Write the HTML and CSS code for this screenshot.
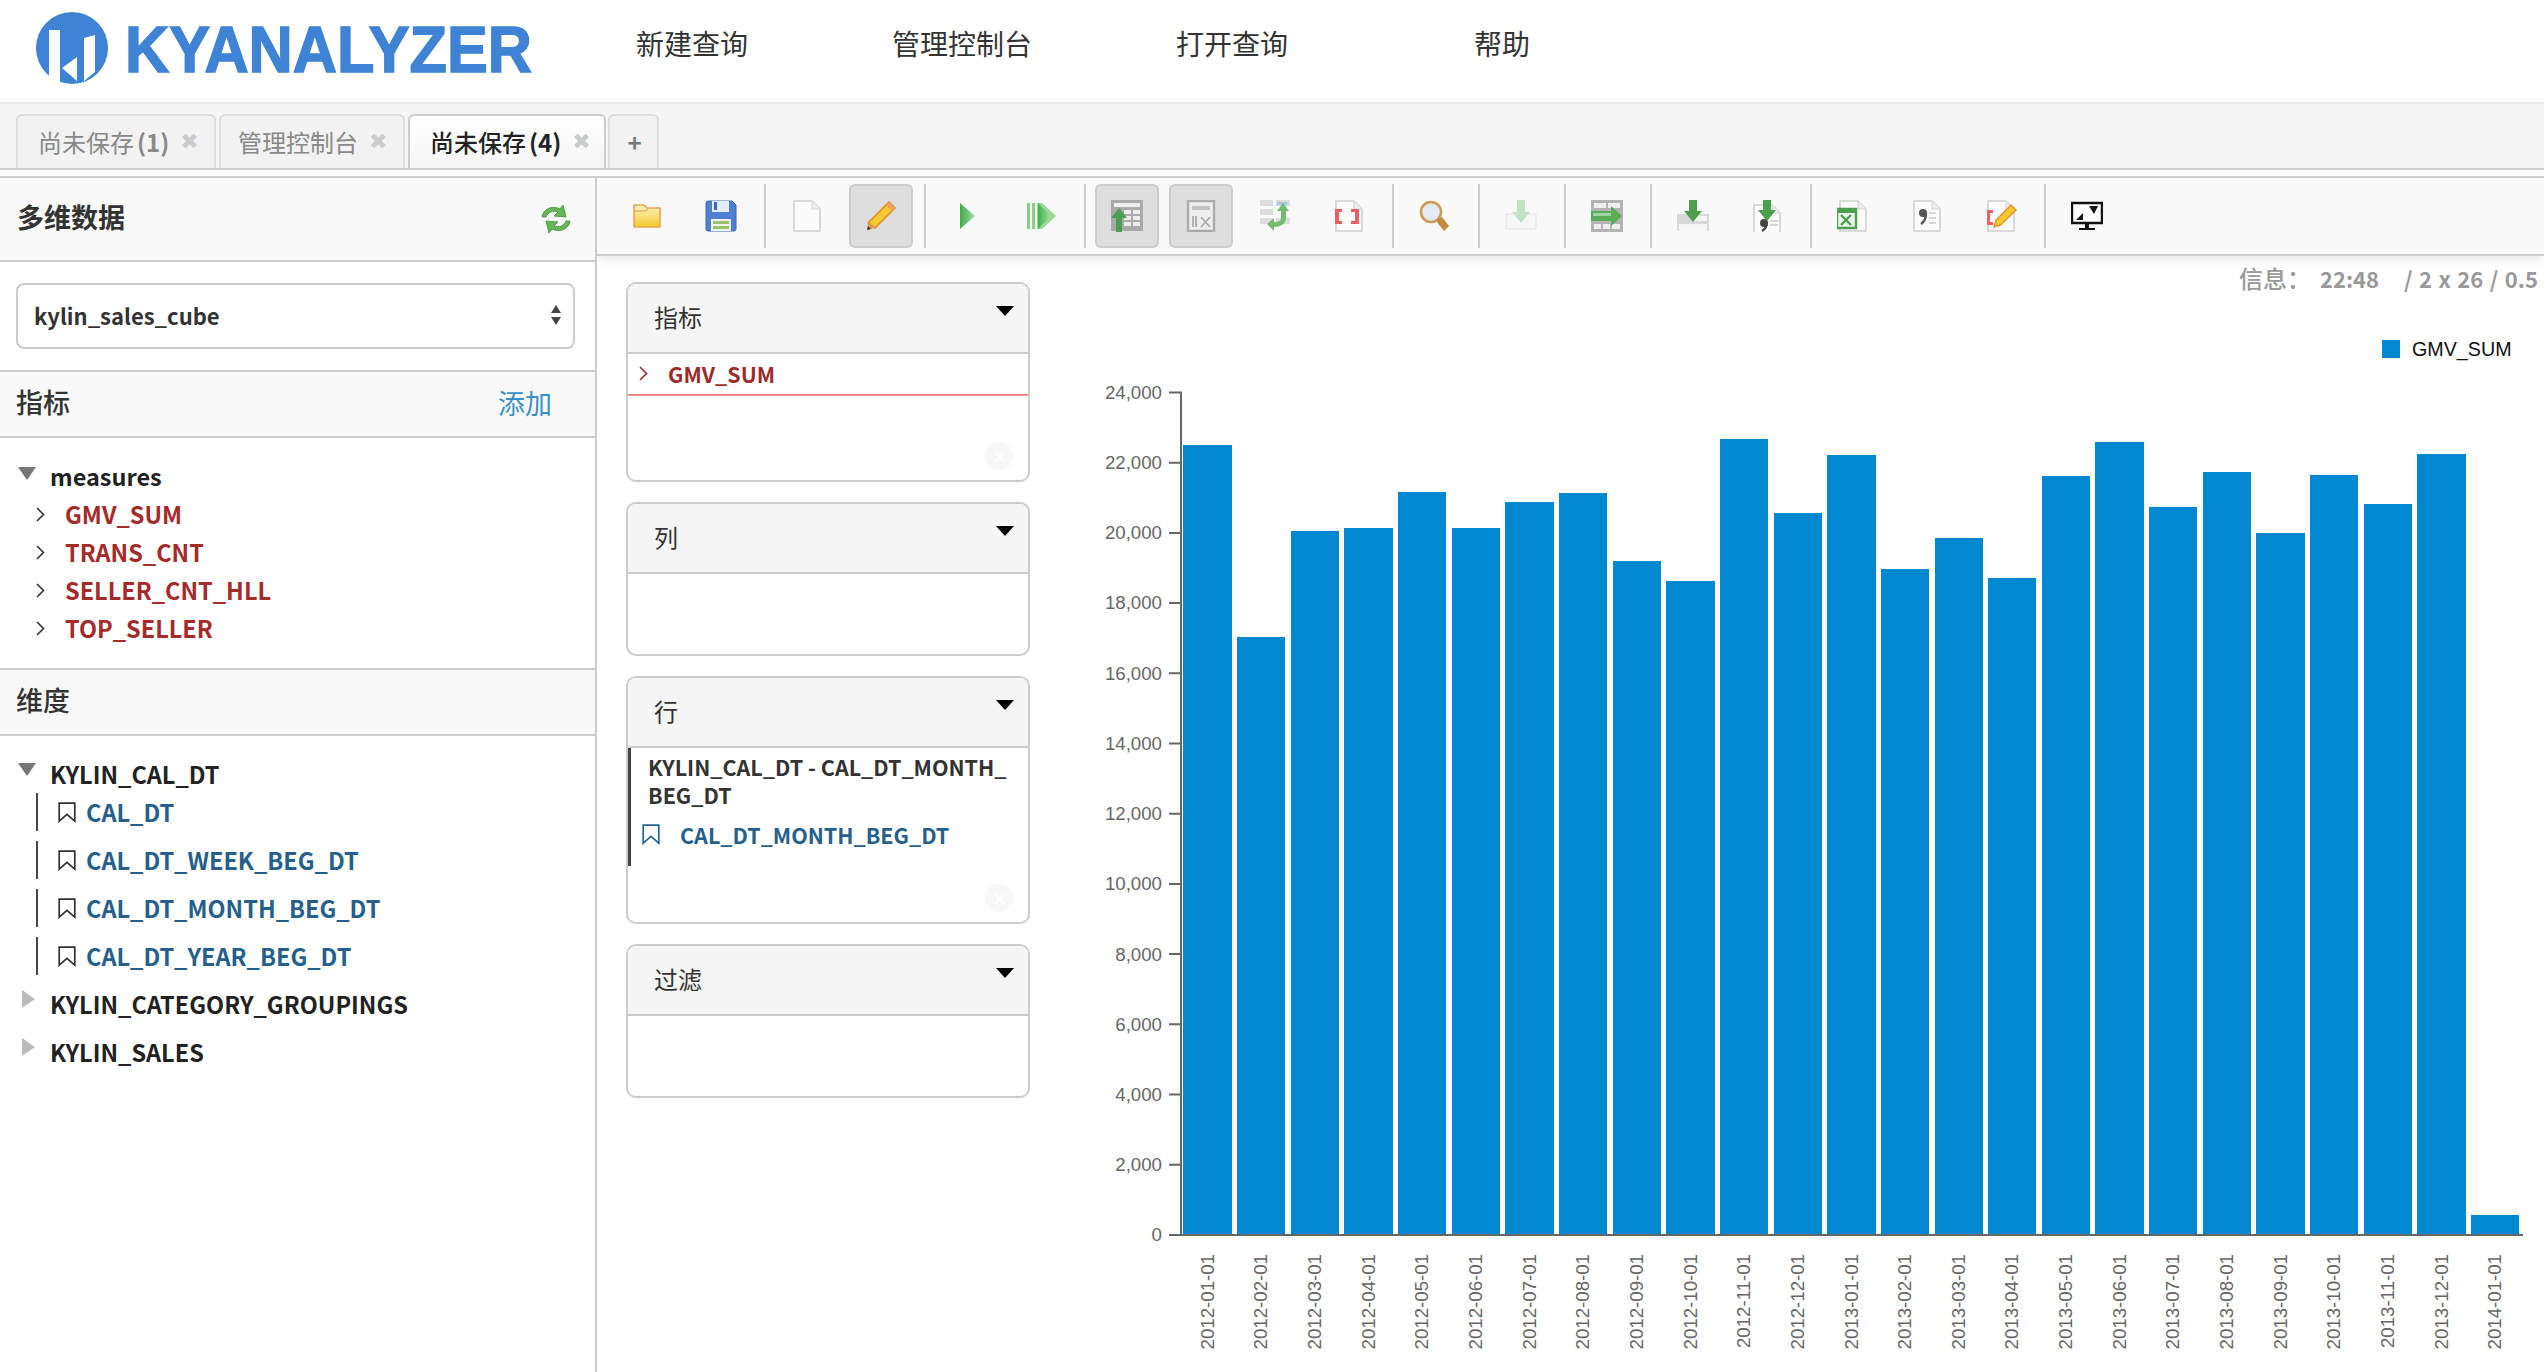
FILE: index.html
```html
<!DOCTYPE html>
<html>

<head>
	<meta charset="utf-8">
	<title>KyAnalyzer</title>
	<link rel="stylesheet" href="styles.css">
</head>

<body>
	<!-- shared icon parts -->
	<svg class="sprite">
		<defs>
			<linearGradient id="gYellow" x1="0" y1="0" x2="0" y2="1">
				<stop offset="0" stop-color="#fff3c4" />
				<stop offset="1" stop-color="#f5c92e" />
			</linearGradient>
			<linearGradient id="gGreen" x1="0" y1="0" x2="1" y2="0">
				<stop offset="0" stop-color="#3fae4a" />
				<stop offset="1" stop-color="#a4dfa2" />
			</linearGradient>
			<symbol id="chev" viewBox="0 0 9 15">
				<path d="M1 1l6.5 6.5L1 14" fill="none" stroke="currentColor" stroke-width="1.6" />
			</symbol>
			<symbol id="mark" viewBox="0 0 18 21">
				<path d="M1.2 1.2h15.6v18L9 12.4 1.2 19.2z" fill="none" stroke="currentColor" stroke-width="1.7" />
			</symbol>
			<symbol id="page" viewBox="0 0 32 32">
				<path d="M3 1h18l8 8v22H3z" fill="#fbfbfb" stroke="#cfcfcf" stroke-width="1.6" />
				<path d="M21 1v8h8" fill="#eee" stroke="#d8d8d8" stroke-width="1.2" />
			</symbol>
		</defs>
	</svg>

	<header class="topbar">
		<div class="logo">
			<svg width="636" height="96" viewBox="0 0 636 96">
				<circle cx="72" cy="48" r="36" fill="#3f83d4" />
				<path d="M49 30h11v53H49zM62 68l15-11v24zM84 38l11-3v37l-11 9z" fill="#fff" />
				<text class="logoText" x="125" y="72" textLength="407" lengthAdjust="spacingAndGlyphs">KYANALYZER</text>
			</svg>
		</div>
		<nav class="menu">
			<a>新建查询</a>
			<a>管理控制台</a>
			<a>打开查询</a>
			<a>帮助</a>
		</nav>
	</header>

	<div class="tabs">
		<div class="tab tabOne">尚未保存 <b>(1)</b><span class="close">✖</span></div>
		<div class="tab tabTwo">管理控制台<span class="close">✖</span></div>
		<div class="tab tabThree selected">尚未保存 <b>(4)</b><span class="close">✖</span></div>
		<div class="tab tabAdd"><b>+</b></div>
	</div>

	<main class="main">
		<aside class="sidebar">
			<div class="cubeHead">
				<h3>多维数据</h3>
				<svg width="34" height="34" viewBox="0 0 34 34">
					<path d="M3 15C4 7 13 3 21 7l3-4 3 12-12-1 4-4c-5-2-10 0-12 5z" fill="#67b556" stroke="#4f9e45" />
					<path d="M31 19c-1 8-10 12-18 8l-3 4-3-12 12 1-4 4c5 2 10 0 12-5z" fill="#67b556" stroke="#4f9e45" />
				</svg>
			</div>
			<div class="cubePick">
				<div class="select">
					<span>kylin_sales_cube</span>
					<i class="updown"></i>
				</div>
			</div>

			<div class="sectionHead">
				<h4>指标</h4>
				<a class="addLink">添加</a>
			</div>
			<ul class="tree measureTree">
				<li class="group"><i class="triDown"></i>measures</li>
				<li class="measure"><svg class="chev"><use href="#chev" /></svg>GMV_SUM</li>
				<li class="measure"><svg class="chev"><use href="#chev" /></svg>TRANS_CNT</li>
				<li class="measure"><svg class="chev"><use href="#chev" /></svg>SELLER_CNT_HLL</li>
				<li class="measure"><svg class="chev"><use href="#chev" /></svg>TOP_SELLER</li>
			</ul>

			<div class="sectionHead">
				<h4>维度</h4>
			</div>
			<ul class="tree dimTree">
				<li class="group"><i class="triDown"></i>KYLIN_CAL_DT</li>
				<li class="level"><svg class="mark"><use href="#mark" /></svg>CAL_DT</li>
				<li class="level"><svg class="mark"><use href="#mark" /></svg>CAL_DT_WEEK_BEG_DT</li>
				<li class="level"><svg class="mark"><use href="#mark" /></svg>CAL_DT_MONTH_BEG_DT</li>
				<li class="level"><svg class="mark"><use href="#mark" /></svg>CAL_DT_YEAR_BEG_DT</li>
				<li class="group"><i class="triRight"></i>KYLIN_CATEGORY_GROUPINGS</li>
				<li class="group"><i class="triRight"></i>KYLIN_SALES</li>
			</ul>
		</aside>

		<section class="content">
			<div class="toolbar">
				<span class="tool"><svg width="32" height="32" viewBox="0 0 32 32">
						<path d="M3 5h10l3 3h13v19H3z" fill="url(#gYellow)" stroke="#eaa652" stroke-width="1.6" stroke-linejoin="round" />
						<path d="M4 11h11l2-2" fill="none" stroke="#e6b264" stroke-width="1.4" />
					</svg></span>
				<span class="tool"><svg width="32" height="32" viewBox="0 0 32 32">
						<path d="M1 3a2 2 0 0 1 2-2h24l4 4v24a2 2 0 0 1-2 2H3a2 2 0 0 1-2-2z" fill="#4f7fd0" stroke="#3c68b8" />
						<path d="M7 1h17v11H7z" fill="#e4ecf8" />
						<path d="M9 2h3v8H9z" fill="#3c68b8" />
						<path d="M6 19h20v12H6z" fill="#f0f4f0" />
						<path d="M8 21h16v3H8zM8 26h16v3H8z" fill="#9bc36a" />
					</svg></span>
				<i class="sep"></i>
				<span class="tool"><svg width="32" height="32" viewBox="0 0 32 32"><use href="#page" /></svg></span>
				<span class="tool on"><svg width="32" height="32" viewBox="0 0 32 32">
						<path d="M24 2l6 6L10 28 3 23z" fill="#f3c92f" stroke="#e08f2e" stroke-width="1.6" />
						<path d="M3 23l-1 7 8-2z" fill="#d99b59" />
						<path d="M2 30l1-4 3 3z" fill="#5a3a1c" />
						<path d="M21 5l6 6 3-3-6-6z" fill="#f0a25a" />
					</svg></span>
				<i class="sep"></i>
				<span class="tool"><svg width="32" height="32" viewBox="0 0 32 32">
						<path d="M9 3l15 13L9 29z" fill="url(#gGreen)" />
					</svg></span>
				<span class="tool"><svg width="32" height="32" viewBox="0 0 32 32">
						<path d="M2 3h3v26H2zM7 3h3v26H7z" fill="#88cf8a" />
						<path d="M12 3h5l14 13-14 13h-5z" fill="#9ad89a" />
						<path d="M13 3l13 13-13 13z" fill="url(#gGreen)" />
					</svg></span>
				<i class="sep"></i>
				<span class="tool on"><svg width="32" height="32" viewBox="0 0 32 32">
						<path d="M0 0h32v31H0z" fill="#a9a9a9" />
						<path d="M3 3h26v4H3zM13 10h7v4h-7zM22 10h7v4h-7zM13 16h7v4h-7zM22 16h7v4h-7zM13 22h7v4h-7zM22 22h7v4h-7z" fill="#eee" />
						<path d="M8 8l8 10h-5v14H5V18H0z" fill="#4aa050" />
					</svg></span>
				<span class="tool on"><svg width="32" height="32" viewBox="0 0 32 32">
						<path d="M3 1h26v30H3z" fill="#eee" stroke="#aaa" stroke-width="2.4" />
						<path d="M7 6h18v4H7z" fill="#c2c2c2" />
						<path d="M8 16v11M11 16v11M16 17l9 10M25 17l-9 10" fill="none" stroke="#aaa" stroke-width="1.8" />
					</svg></span>
				<span class="tool"><svg width="32" height="32" viewBox="0 0 32 32">
						<path d="M1 0h13v6H1zM17 0h14v6H17zM1 9h13v6H1zM1 18h13v6H1zM17 18h14v6H17z" fill="#dcdcdc" />
						<path d="M18 2h10v3H18z" fill="#a9c8ec" />
						<path d="M24 3l6 8h-3v7c0 6-6 9-12 9v4l-7-7 7-6v4c4 0 7-1 7-4v-7h-4z" fill="#72bd70" />
					</svg></span>
				<span class="tool"><svg width="32" height="32" viewBox="0 0 32 32">
						<use href="#page" />
						<path d="M9 9H2v15h7v-3H6V12h3zM18 9h8v15h-8v-3h4V12h-4z" fill="#ef5f5f" />
					</svg></span>
				<i class="sep"></i>
				<span class="tool"><svg width="32" height="32" viewBox="0 0 32 32">
						<circle cx="12" cy="12" r="10" fill="#e2ecf8" stroke="#cf9b52" stroke-width="2.6" />
						<path d="M19 19l4-2 7 9-5 5-7-9z" fill="#c98a3e" />
					</svg></span>
				<i class="sep"></i>
				<span class="tool faded"><svg width="32" height="32" viewBox="0 0 32 32">
						<path d="M1 14h30v15H1z" fill="#f7f7f7" stroke="#e4e4e4" />
						<path d="M12 0h8v12h5l-9 11-9-11h5z" fill="#c3e2c3" />
					</svg></span>
				<i class="sep"></i>
				<span class="tool"><svg width="32" height="32" viewBox="0 0 32 32">
						<path d="M0 0h32v32H0z" fill="#b4b4b4" />
						<path d="M3 3h12v5H3zM17 3h12v5H17zM3 24h7v5H3zM12 24h7v5h-7zM21 24h8v5h-8z" fill="#eee" />
						<path d="M0 11h20V6l11 10-11 10v-5H0z" fill="#59ad59" />
						<path d="M2 13h18v3H2z" fill="#9fd59f" />
					</svg></span>
				<i class="sep"></i>
				<span class="tool"><svg width="32" height="32" viewBox="0 0 32 32">
						<path d="M0 14h32v17H0z" fill="#d9d9d9" />
						<path d="M2 24h28v7H2zM16 16h14v5H16z" fill="#f6f6f6" />
						<path d="M12 0h8v11h5l-9 11-9-11h5z" fill="#4c9f4c" />
					</svg></span>
				<span class="tool"><svg width="32" height="32" viewBox="0 0 32 32">
						<use href="#page" y="4" />
						<circle cx="13" cy="23" r="4" fill="#444" />
						<path d="M16 22c0 4-2 7-5 9" fill="none" stroke="#444" stroke-width="2.4" />
						<path d="M19 21h8M19 25h8" stroke="#ccc" stroke-width="1.6" />
						<path d="M12 0h8v10h5l-9 11-9-11h5z" fill="#4c9f4c" />
					</svg></span>
				<i class="sep"></i>
				<span class="tool"><svg width="32" height="32" viewBox="0 0 32 32">
						<use href="#page" />
						<path d="M0 9h19v19H0z" fill="#eaf4ea" stroke="#4f9e4f" stroke-width="2.4" />
						<path d="M0 9h19v4H0z" fill="#4f9e4f" />
						<path d="M4 15l10 10M14 15L4 25" stroke="#4f9e4f" stroke-width="2.4" />
					</svg></span>
				<span class="tool"><svg width="32" height="32" viewBox="0 0 32 32">
						<use href="#page" />
						<circle cx="12" cy="13" r="4" fill="#555" />
						<path d="M15 13c0 5-2 9-5 11" fill="none" stroke="#555" stroke-width="2.4" />
						<path d="M18 13h7M18 18h7M18 23h7" stroke="#ccc" stroke-width="1.6" />
					</svg></span>
				<span class="tool"><svg width="32" height="32" viewBox="0 0 32 32">
						<use href="#page" />
						<path d="M8 10H2v15h6v-3H5v-9h3z" fill="#ef5f5f" />
						<path d="M26 5l5 5-15 15-7 2 2-7z" fill="#f3c92f" stroke="#e08f2e" stroke-width="1.4" />
					</svg></span>
				<i class="sep"></i>
				<span class="tool"><svg width="32" height="32" viewBox="0 0 32 32">
						<path d="M1 3h30v20H1z" fill="#fff" stroke="#111" stroke-width="2.4" />
						<path d="M5 20l7-7v7zM18 6h9l-4 8z" fill="#111" />
						<path d="M14 24h4v4h-4zM8 28h16v2H8z" fill="#111" />
					</svg></span>
			</div>

			<div class="workspace">
				<div class="panels">
					<div class="panel measuresPanel">
						<div class="panelHead">指标<i class="caret"></i></div>
						<div class="panelBody">
							<div class="pickedMeasure"><svg class="chev"><use href="#chev" /></svg>GMV_SUM</div>
							<span class="clear">✕</span>
						</div>
					</div>
					<div class="panel">
						<div class="panelHead">列<i class="caret"></i></div>
						<div class="panelBody"></div>
					</div>
					<div class="panel rowsPanel">
						<div class="panelHead">行<i class="caret"></i></div>
						<div class="panelBody">
							<div class="pickedDim">
								<div class="dimTitle">KYLIN_CAL_DT - CAL_DT_MONTH_<br>BEG_DT</div>
								<div class="dimLevel"><svg class="mark"><use href="#mark" /></svg>CAL_DT_MONTH_BEG_DT</div>
							</div>
							<span class="clear">✕</span>
						</div>
					</div>
					<div class="panel">
						<div class="panelHead">过滤<i class="caret"></i></div>
						<div class="panelBody"></div>
					</div>
				</div>

				<div class="result">
					<div class="info">
						<span class="infoLabel">信息：</span><span class="infoTime">22:48</span><span class="infoStats">/ 2 x 26 / 0.5</span>
					</div>
					<svg class="chart" width="1484" height="1042" viewBox="1060 330 1484 1042">
						<rect x="2382" y="340" width="18" height="18" fill="#0288d1" />
						<text class="legend" x="2412" y="356">GMV_SUM</text>

						<g class="axisText" text-anchor="end">
							<text x="1162" y="399">24,000</text>
							<text x="1162" y="469">22,000</text>
							<text x="1162" y="539">20,000</text>
							<text x="1162" y="609">18,000</text>
							<text x="1162" y="680">16,000</text>
							<text x="1162" y="750">14,000</text>
							<text x="1162" y="820">12,000</text>
							<text x="1162" y="890">10,000</text>
							<text x="1162" y="961">8,000</text>
							<text x="1162" y="1031">6,000</text>
							<text x="1162" y="1101">4,000</text>
							<text x="1162" y="1171">2,000</text>
							<text x="1162" y="1241">0</text>
						</g>

						<g fill="#0288d1">
							<rect x="1183" y="445" width="49" height="789" />
							<rect x="1237" y="637" width="48" height="597" />
							<rect x="1291" y="531" width="48" height="703" />
							<rect x="1344" y="528" width="49" height="706" />
							<rect x="1398" y="492" width="48" height="742" />
							<rect x="1452" y="528" width="48" height="706" />
							<rect x="1505" y="502" width="49" height="732" />
							<rect x="1559" y="493" width="48" height="741" />
							<rect x="1613" y="561" width="48" height="673" />
							<rect x="1666" y="581" width="49" height="653" />
							<rect x="1720" y="439" width="48" height="795" />
							<rect x="1774" y="513" width="48" height="721" />
							<rect x="1827" y="455" width="49" height="779" />
							<rect x="1881" y="569" width="48" height="665" />
							<rect x="1935" y="538" width="48" height="696" />
							<rect x="1988" y="578" width="48" height="656" />
							<rect x="2042" y="476" width="48" height="758" />
							<rect x="2095" y="442" width="49" height="792" />
							<rect x="2149" y="507" width="48" height="727" />
							<rect x="2203" y="472" width="48" height="762" />
							<rect x="2256" y="533" width="49" height="701" />
							<rect x="2310" y="475" width="48" height="759" />
							<rect x="2364" y="504" width="48" height="730" />
							<rect x="2417" y="454" width="49" height="780" />
							<rect x="2471" y="1215" width="48" height="19" />
						</g>

						<path class="axis" d="M1169 392.5H1181V1235H2523M1169 462.7H1181M1169 532.9H1181M1169 603H1181M1169 673.3H1181M1169 743.5H1181M1169 813.7H1181M1169 883.9H1181M1169 954.1H1181M1169 1024.3H1181M1169 1094.5H1181M1169 1164.7H1181M1169 1235H1181" />

						<g class="axisText" text-anchor="end">
							<text transform="translate(1214 1254) rotate(-90)">2012-01-01</text>
							<text transform="translate(1267 1254) rotate(-90)">2012-02-01</text>
							<text transform="translate(1321 1254) rotate(-90)">2012-03-01</text>
							<text transform="translate(1375 1254) rotate(-90)">2012-04-01</text>
							<text transform="translate(1428 1254) rotate(-90)">2012-05-01</text>
							<text transform="translate(1482 1254) rotate(-90)">2012-06-01</text>
							<text transform="translate(1536 1254) rotate(-90)">2012-07-01</text>
							<text transform="translate(1589 1254) rotate(-90)">2012-08-01</text>
							<text transform="translate(1643 1254) rotate(-90)">2012-09-01</text>
							<text transform="translate(1697 1254) rotate(-90)">2012-10-01</text>
							<text transform="translate(1750 1254) rotate(-90)">2012-11-01</text>
							<text transform="translate(1804 1254) rotate(-90)">2012-12-01</text>
							<text transform="translate(1858 1254) rotate(-90)">2013-01-01</text>
							<text transform="translate(1911 1254) rotate(-90)">2013-02-01</text>
							<text transform="translate(1965 1254) rotate(-90)">2013-03-01</text>
							<text transform="translate(2018 1254) rotate(-90)">2013-04-01</text>
							<text transform="translate(2072 1254) rotate(-90)">2013-05-01</text>
							<text transform="translate(2126 1254) rotate(-90)">2013-06-01</text>
							<text transform="translate(2179 1254) rotate(-90)">2013-07-01</text>
							<text transform="translate(2233 1254) rotate(-90)">2013-08-01</text>
							<text transform="translate(2287 1254) rotate(-90)">2013-09-01</text>
							<text transform="translate(2340 1254) rotate(-90)">2013-10-01</text>
							<text transform="translate(2394 1254) rotate(-90)">2013-11-01</text>
							<text transform="translate(2448 1254) rotate(-90)">2013-12-01</text>
							<text transform="translate(2501 1254) rotate(-90)">2014-01-01</text>
						</g>
					</svg>
				</div>
			</div>
		</section>
	</main>
</body>

</html>
```

FILE: styles.css
```css
* {
	box-sizing: border-box;
}

html,
body {
	height: 1372px;
}

body {
	margin: 0;
	overflow: hidden;
	display: flex;
	flex-direction: column;
	background-color: #fff;
	color: #333;
	font-family: "Noto Sans CJK SC", "Noto Sans", sans-serif;
	font-size: 24px;
}

.sprite {
	position: absolute;
	width: 0;
	height: 0;
}

ul {
	list-style: none;
	margin: 0;
	padding: 0;
}

h3,
h4 {
	margin: 0;
}

/* top bar */
.topbar {
	display: flex;
	height: 104px;
	flex: none;
	border-bottom: 2px solid #e8e8e8;
}

.logo {
	width: 636px;
	flex: none;
}

.logo svg {
	display: block;
}

.logoText {
	font-family: "Liberation Sans", sans-serif;
	font-weight: 700;
	font-size: 65px;
	fill: #3f83d4;
	stroke: #3f83d4;
	stroke-width: 1.5;
}

.menu {
	display: flex;
	height: 86px;
	align-items: center;
	font-size: 28px;
	color: #333;
}

.menu a {
	margin-right: 144px;
	white-space: nowrap;
}

.menu a:nth-child(3) {
	margin-right: 186px;
}

/* tabs */
.tabs {
	display: flex;
	flex: none;
	height: 66px;
	padding: 10px 0 0 16px;
	gap: 3px;
	background-color: #f5f5f5;
	border-bottom: 2px solid #ccc;
}

.tab {
	display: flex;
	align-items: center;
	padding: 0 0 2px 20px;
	height: 54px;
	border: 2px solid #ddd;
	border-bottom: none;
	border-radius: 6px 6px 0 0;
	background-color: #f2f2f2;
	color: #888;
	white-space: nowrap;
}

.tab b {
	margin-left: 3px;
}

.tabOne {
	width: 200px;
}

.tabTwo {
	width: 186px;
	padding-left: 17px;
}

.tabThree {
	width: 198px;
}

.tabAdd {
	width: 51px;
	margin-left: -1px;
	padding-left: 2px;
	justify-content: center;
	color: #777;
}

.tabAdd b {
	margin: 0;
}

.selected {
	border-color: #ccc;
	background-image: linear-gradient(#fff, #f5f5f5);
	color: #222;
	font-weight: 500;
}

.close {
	margin-left: 11px;
	color: #ccc;
	font-size: 22px;
	font-family: "DejaVu Sans", sans-serif;
}

/* sidebar + content */
.main {
	display: flex;
	flex: 1;
	min-height: 0;
	margin-top: 6px;
	border-top: 2px solid #ccc;
}

.sidebar {
	width: 597px;
	flex: none;
	border-right: 2px solid #ccc;
}

.cubeHead {
	display: flex;
	justify-content: space-between;
	align-items: center;
	height: 84px;
	padding: 0 22px 0 17px;
	background-color: #f9f9f9;
	border-bottom: 2px solid #ccc;
}

.cubeHead h3 {
	margin-bottom: 6px;
	font-size: 27px;
	font-weight: 700;
}

.cubePick {
	padding: 21px 20px 21px 16px;
}

.select {
	display: flex;
	justify-content: space-between;
	align-items: center;
	height: 66px;
	padding: 0 12px 2px 16px;
	border: 2px solid #ccc;
	border-radius: 8px;
	font-weight: 700;
	font-size: 22px;
}

.updown {
	position: relative;
	width: 0;
	height: 22px;
	margin-right: 5px;
}

.updown::before,
.updown::after {
	content: "";
	position: absolute;
	left: -5px;
	border-left: 5px solid transparent;
	border-right: 5px solid transparent;
}

.updown::before {
	top: 1px;
	border-bottom: 8px solid #444;
}

.updown::after {
	bottom: 1px;
	border-top: 8px solid #444;
}

.sectionHead {
	display: flex;
	justify-content: space-between;
	align-items: center;
	height: 68px;
	padding: 0 43px 0 16px;
	background-color: #f9f9f9;
	border-top: 2px solid #ccc;
	border-bottom: 2px solid #ccc;
}

.sectionHead h4 {
	margin-bottom: 6px;
	font-size: 27px;
	font-weight: 500;
}

.addLink {
	margin-bottom: 4px;
	font-size: 27px;
	color: #3a8fc9;
}

.tree {
	font-weight: 700;
	font-size: 23.5px;
}

.tree li {
	display: flex;
	align-items: center;
	height: 38px;
}

.measureTree {
	padding: 19px 0 21px;
}

.dimTree {
	padding-top: 19px;
}

.dimTree .group {
	margin-bottom: 10px;
}

.dimTree .group:first-child {
	margin-bottom: 0;
}

.group {
	padding-left: 50px;
	color: #222;
	position: relative;
}

.triDown,
.triRight {
	position: absolute;
	width: 0;
	height: 0;
}

.triDown {
	left: 18px;
	top: 10px;
	border-left: 9px solid transparent;
	border-right: 9px solid transparent;
	border-top: 13px solid #777;
}

.dimTree .triDown {
	top: 8px;
}

.triRight {
	left: 22px;
	top: 5px;
	border-top: 9px solid transparent;
	border-bottom: 9px solid transparent;
	border-left: 13px solid #bbb;
}

.measure {
	padding-left: 36px;
	color: #a52a2a;
}

.chev {
	width: 9px;
	height: 15px;
	margin-right: 20px;
	color: #333;
	flex: none;
}

.level {
	margin: 0 0 10px 36px;
	padding-left: 20px;
	border-left: 2px solid #444;
	color: #255f8c;
}

.mark {
	width: 18px;
	height: 21px;
	margin-right: 10px;
	color: #333;
	flex: none;
}

/* toolbar */
.content {
	flex: 1;
	min-width: 0;
	overflow: hidden;
}

.toolbar {
	display: flex;
	align-items: center;
	height: 78px;
	padding-left: 13px;
	background-color: #f9f9f9;
	border-bottom: 2px solid #ccc;
	box-shadow: 0 4px 8px rgba(0, 0, 0, 0.08);
	position: relative;
}

.tool {
	display: flex;
	justify-content: center;
	align-items: center;
	width: 64px;
	height: 64px;
	margin: 0 5px;
	flex: none;
	border: 2px solid transparent;
	border-radius: 6px;
}

.on {
	background-color: #dedede;
	border-color: #ccc;
}

.sep {
	width: 2px;
	height: 64px;
	margin: 0 4px 0 6px;
	flex: none;
	background-color: #ccc;
}

/* panels */
.workspace {
	display: flex;
}

.panels {
	display: flex;
	flex-direction: column;
	gap: 20px;
	width: 433px;
	flex: none;
	padding: 26px 0 0 29px;
}

.panel {
	height: 154px;
	border: 2px solid #ccc;
	border-radius: 10px;
	overflow: hidden;
}

.measuresPanel {
	height: 200px;
}

.rowsPanel {
	height: 248px;
}

.panelHead {
	display: flex;
	justify-content: space-between;
	align-items: center;
	height: 70px;
	padding: 0 14px 4px 26px;
	background-color: #f5f5f5;
	border-bottom: 2px solid #ccc;
}

.caret {
	width: 0;
	height: 0;
	margin-bottom: 10px;
	border-left: 9px solid transparent;
	border-right: 9px solid transparent;
	border-top: 10px solid #000;
}

.panelBody {
	position: relative;
	height: 100%;
}

.pickedMeasure {
	display: flex;
	align-items: center;
	height: 42px;
	padding: 0 0 2px 11px;
	border-bottom: 2px solid #e88a8a;
	color: #9c2c2c;
	font-size: 21.5px;
	font-weight: 700;
}

.pickedMeasure .chev {
	margin-right: 20px;
	color: #9c2c2c;
}

.pickedDim {
	height: 118px;
	padding-top: 5px;
	border-left: 3px solid #444;
	font-size: 21.5px;
	font-weight: 700;
}

.dimTitle {
	padding-left: 17px;
	line-height: 28px;
	color: #333;
}

.dimLevel {
	display: flex;
	align-items: center;
	margin-top: 10px;
	padding-left: 11px;
	color: #255f8c;
}

.dimLevel .mark {
	margin-right: 20px;
	color: #2a6496;
}

.clear {
	position: absolute;
	display: flex;
	justify-content: center;
	align-items: center;
	width: 28px;
	height: 28px;
	right: 15px;
	border-radius: 50%;
	background-color: #f8f8f8;
	color: #fff;
	font-size: 16px;
	font-weight: 700;
}

.measuresPanel .clear {
	top: 88px;
}

.rowsPanel .clear {
	top: 136px;
}

/* chart */
.result {
	flex: 1;
	min-width: 0;
	margin-left: 30px;
}

.info {
	display: flex;
	height: 43px;
	align-items: center;
	margin-bottom: 31px;
	padding-left: 1179px;
	color: #999;
	font-weight: 700;
	font-size: 22px;
	white-space: pre;
}

.infoLabel {
	width: 81px;
	flex: none;
	font-size: 24px;
	font-weight: 500;
}

.infoTime {
	width: 84px;
	flex: none;
}

.infoStats {
	flex: none;
	word-spacing: 1.5px;
}

.chart {
	display: block;
}

.legend {
	font-family: "Liberation Sans", sans-serif;
	font-size: 19.7px;
	fill: #111;
}

.axisText {
	font-family: "Liberation Sans", sans-serif;
	font-size: 18.67px;
	fill: #666;
}

.axis {
	fill: none;
	stroke: #666;
	stroke-width: 2;
}
```
